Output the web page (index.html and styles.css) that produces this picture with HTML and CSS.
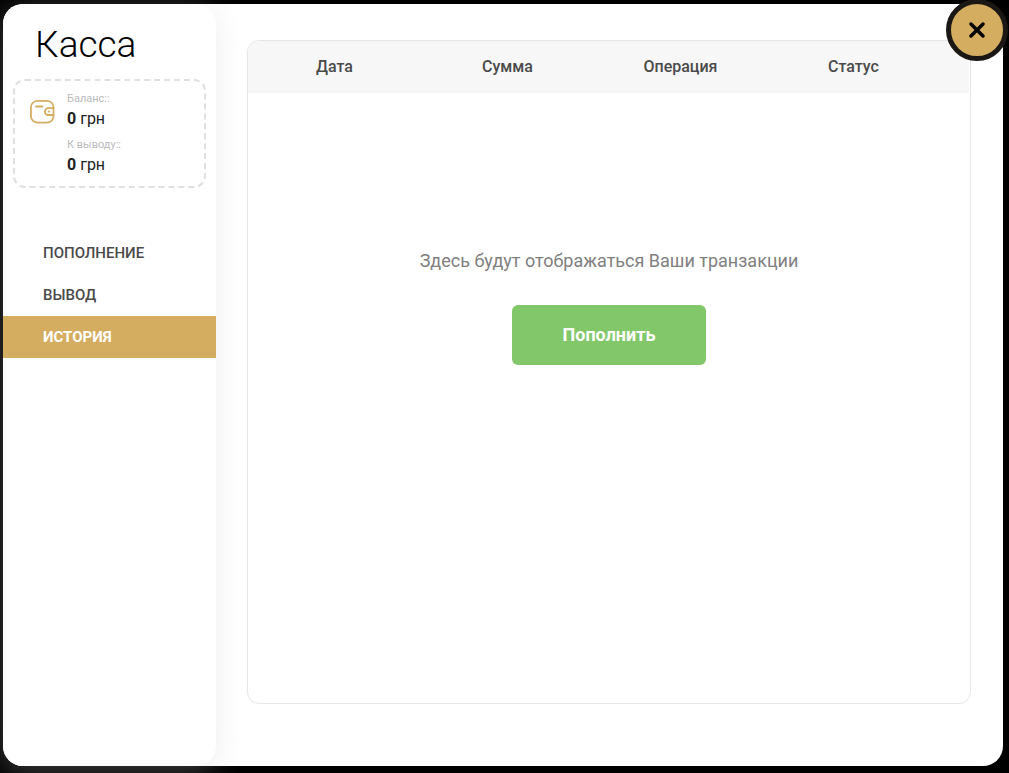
FILE: index.html
```html
<!DOCTYPE html>
<html lang="ru">
<head>
<meta charset="utf-8">
<meta name="viewport" content="width=device-width, initial-scale=1">
<title>Касса</title>
<link rel="stylesheet" href="styles.css">
</head>
<body>
<div class="dialog" role="dialog" aria-labelledby="title">
  <aside class="sidebar">
    <h1 class="title" id="title">Касса</h1>
    <div class="wallet">
      <svg class="wallet-icon" viewBox="0 0 26 26" fill="none" stroke="currentColor" stroke-width="1.8" aria-hidden="true">
        <path d="M24.500 9V8.500C24.500 4.500 21.500 1.900 17.500 1.900h-8C5 1.900 1.900 4.500 1.900 8.500v8.500c0 4 3.100 6.600 7.600 6.600h8c4 0 7-2.600 7-6.600V16"/>
        <path d="M24.500 9.200h-5.200a3.400 3.400 0 0 0 0 6.800h5.200z"/>
        <path d="M7 7.500h6.500" stroke-linecap="round"/>
        <circle cx="20" cy="12.600" r="1.100" fill="currentColor" stroke="none"/>
      </svg>
      <dl class="balances">
        <dt>Баланс::</dt>
        <dd><b>0</b> грн</dd>
        <dt>К выводу::</dt>
        <dd><b>0</b> грн</dd>
      </dl>
    </div>
    <nav class="menu">
      <a class="menu-link" href="#deposit">Пополнение</a>
      <a class="menu-link" href="#withdraw">Вывод</a>
      <a class="menu-link active" href="#history" aria-current="page">История</a>
    </nav>
  </aside>
  <main class="content">
    <section class="history">
      <table class="history-table">
        <thead>
          <tr><th scope="col">Дата</th><th scope="col">Сумма</th><th scope="col">Операция</th><th scope="col">Статус</th></tr>
        </thead>
      </table>
      <div class="empty">
        <p class="empty-text">Здесь будут отображаться Ваши транзакции</p>
        <button class="deposit" type="button">Пополнить</button>
      </div>
    </section>
  </main>
  <button class="close" type="button" aria-label="Закрыть">
    <svg class="close-icon" viewBox="0 0 16 16" fill="none" stroke="currentColor" stroke-width="3.400" stroke-linecap="round" aria-hidden="true"><path d="M2 2l12 12M14 2L2 14"/></svg>
  </button>
</div>
</body>
</html>
```

FILE: styles.css
```css
* {
  box-sizing: border-box;
}

body {
  margin: 0;
  padding: 4px 6px 7px 3px;
  min-height: 100vh;
  display: flex;
  overflow: hidden;
  background: #000;
  color: #222;
  font-family: Roboto, "Liberation Sans", sans-serif;
}

.dialog {
  position: relative;
  flex: 1;
  display: flex;
  background: #fff;
  border-radius: 20px;
}

.sidebar {
  flex: 0 0 213px;
  background: #fff;
  border-radius: 20px;
  box-shadow: 0 5px 30px rgba(200, 200, 200, 0.32);
}

.title {
  margin: 0;
  padding: 17px 32px 10px;
  color: #000;
  font-size: 37px;
  font-weight: 300;
  line-height: 48px;
}

.wallet {
  display: flex;
  align-items: flex-start;
  gap: 12px;
  margin: 0 10px;
  padding: 9px 14px;
  border: 2px dashed #e0e0e0;
  border-radius: 12px;
}

.wallet-icon {
  width: 26px;
  height: 26px;
  margin-top: 9px;
  color: #d4ad60;
}

.balances {
  margin: 0;
  padding-top: 1px;
}

.balances dt {
  color: #bbb;
  font-size: 11px;
  line-height: 16px;
}

.balances dd {
  margin: 0 0 6px;
  font-size: 16px;
  line-height: 24px;
}

.balances dd:last-child {
  margin-bottom: 0;
}

.balances b {
  font-weight: 700;
}

.menu {
  margin-top: 44px;
}

.menu-link {
  display: block;
  padding: 0 40px;
  color: #4a4a4a;
  font-size: 15px;
  font-weight: 500;
  line-height: 42px;
  text-decoration: none;
  text-transform: uppercase;
}

.menu-link.active {
  background: #d4ad60;
  color: #fff;
  font-weight: 700;
}

.content {
  flex: 1;
  display: flex;
  padding: 36px 32px 62px 31px;
}

.history {
  flex: 1;
  border: 1px solid #e6e6e6;
  border-radius: 12px;
  overflow: hidden;
}

.history-table {
  display: block;
  margin-right: 1px;
  padding-right: 29px;
  background: #f7f7f7;
}

.history-table thead {
  display: block;
}

.history-table tr {
  display: grid;
  grid-template-columns: repeat(4, 1fr);
}

.history-table th {
  padding: 0;
  color: #4a4a4a;
  font-size: 16px;
  font-weight: 500;
  line-height: 52px;
  text-align: center;
}

.empty {
  display: flex;
  flex-direction: column;
  align-items: center;
  gap: 32px;
  padding: 156px 20px 20px;
}

.empty-text {
  margin: 0;
  color: #808080;
  font-size: 18px;
  line-height: 24px;
  text-align: center;
}

.deposit {
  width: 194px;
  height: 60px;
  padding: 0 0 2px;
  border: 0;
  border-radius: 6px;
  background: #83c76b;
  color: #fff;
  font: 700 18px Roboto, "Liberation Sans", sans-serif;
}

.close {
  position: absolute;
  top: -5px;
  right: -5px;
  display: grid;
  place-items: center;
  width: 62px;
  height: 62px;
  padding: 0;
  border: 5px solid #1a1714;
  border-radius: 50%;
  background: #d4ad60;
  color: #000;
}

.close-icon {
  width: 16px;
  height: 16px;
}
```
